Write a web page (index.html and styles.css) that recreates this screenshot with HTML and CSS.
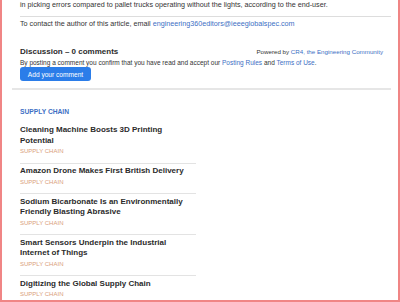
FILE: index.html
```html
<!DOCTYPE html>
<html lang="en">
<head>
  <meta charset="UTF-8" />
  <title>Discussion</title>
  <link rel="stylesheet" href="styles.css">
</head>
<body>
  <div class="frame">
    <div class="article-end">
      <p class="lead">in picking errors compared to pallet trucks operating without the lights, according to the end-user.</p>
      <p class="contact">To contact the author of this article, email <a href="#">engineering360editors@ieeeglobalspec.com</a></p>
    </div>

    <div class="discussion">
      <div class="discussion-head">
        <h2>Discussion – 0 comments</h2>
        <span class="powered">Powered by <a href="#">CR4, the Engineering Community</a></span>
      </div>
      <p class="terms">By posting a comment you confirm that you have read and accept our <a href="#">Posting Rules</a> and <a href="#">Terms of Use</a>.</p>
      <button class="add-btn">Add your comment</button>
    </div>

    <div class="related">
      <h3 class="section">SUPPLY CHAIN</h3>
      <ul class="story-list">
        <li><a href="#">Cleaning Machine Boosts 3D Printing Potential</a><span class="tag">SUPPLY CHAIN</span></li>
        <li><a href="#">Amazon Drone Makes First British Delivery</a><span class="tag">SUPPLY CHAIN</span></li>
        <li><a href="#">Sodium Bicarbonate Is an Environmentally Friendly Blasting Abrasive</a><span class="tag">SUPPLY CHAIN</span></li>
        <li><a href="#">Smart Sensors Underpin the Industrial Internet of Things</a><span class="tag">SUPPLY CHAIN</span></li>
        <li><a href="#">Digitizing the Global Supply Chain</a><span class="tag">SUPPLY CHAIN</span></li>
      </ul>
    </div>
  </div>
</body>
</html>
```

FILE: styles.css
```css
html, body {
  margin: 0;
  padding: 0;
  height: 100%;
}

body {
  font-family: "Liberation Sans", Arial, sans-serif;
  color: #333;
  background: #fff;
  overflow: hidden;
}

a {
  color: #3d6fc4;
  text-decoration: none;
}

.frame {
  box-sizing: border-box;
  height: 302px;
  border: 2px solid #f08585;
  border-top: none;
  overflow: hidden;
  padding: 0 7px 0 10px;
}

.article-end {
  margin-left: 8px;
}

.lead {
  margin: -1px 0 0;
  font-size: 7.2px;
  line-height: 12px;
  padding-bottom: 5px;
  border-bottom: 1px solid #ddd;
}

.contact {
  margin: 1px 0 0;
  font-size: 7.2px;
  line-height: 12px;
}

.discussion {
  margin: 16px 0 0 8px;
  padding-bottom: 7px;
}

.discussion-head {
  display: flex;
  justify-content: space-between;
  align-items: baseline;
  padding-right: 8px;
}

.discussion h2 {
  margin: 0;
  color: #2b2b2b;
  font-size: 8px;
  line-height: 12px;
}

.powered {
  font-size: 6.2px;
}

.terms {
  margin: 0;
  font-size: 6.5px;
  line-height: 9px;
}

.add-btn {
  display: block;
  margin: 0;
  background: #2b7de9;
  color: #fff;
  border: none;
  border-radius: 3px;
  font-family: inherit;
  font-size: 6.6px;
  height: 14px;
  width: 71px;
  padding: 0;
}

.related {
  border-top: 2px solid #e6e6e6;
  padding: 17px 0 0 8px;
}

.section {
  margin: 0 0 6.5px;
  color: #3d6fc4;
  font-size: 6.7px;
  line-height: 9px;
}

.story-list {
  list-style: none;
  margin: 0;
  padding: 0;
  width: 176px;
}

.story-list li {
  padding: 2.5px 0 6.5px;
  border-bottom: 1px solid #e3e3e3;
}

.story-list a {
  display: block;
  color: #2b2b2b;
  font-weight: bold;
  font-size: 8px;
  line-height: 10.5px;
}

.tag {
  display: block;
  margin-top: 1px;
  color: #d9a07a;
  font-size: 6px;
  line-height: 9px;
}
```
